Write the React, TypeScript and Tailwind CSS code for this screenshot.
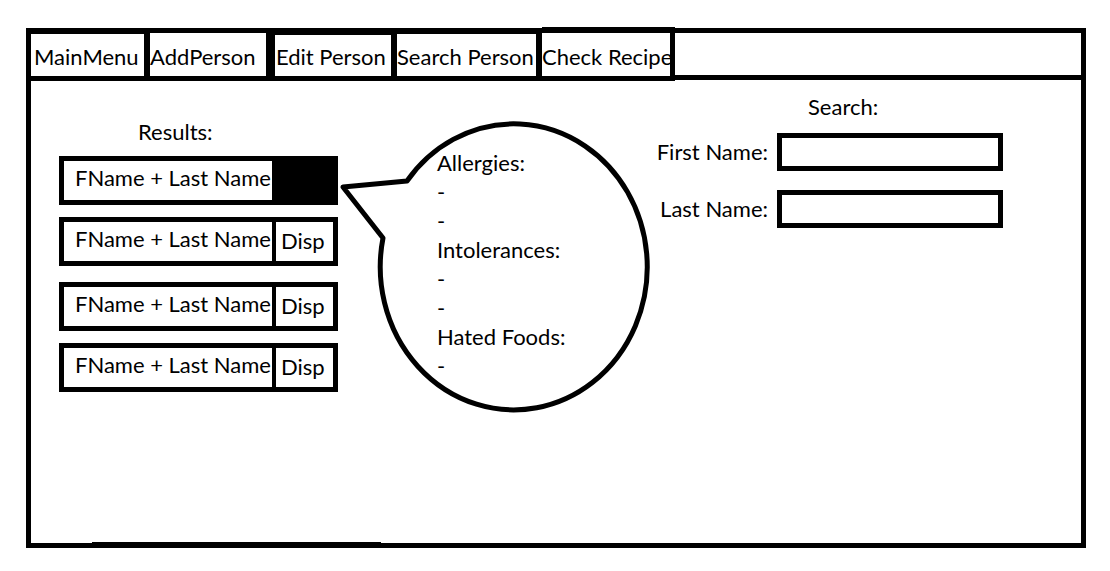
import React from "react";

const tabs = [
  { label: "MainMenu", box: "w-[119px] border-t border-r-6 pl-[3px]" },
  { label: "AddPerson", box: "w-[125px] border-r-9" },
  { label: "Edit Person", box: "w-[122px] border-t-2 border-r-6 pl-px" },
  { label: "Search Person", box: "w-[145px] border-t border-r-6" },
  { label: "Check Recipe", box: "-mt-[6px] w-[133px] border-t-6 border-r-5" },
];

const resultGroups = [
  [
    { id: 1, selected: true },
    { id: 2, selected: false },
  ],
  [
    { id: 3, selected: false },
    { id: 4, selected: false },
  ],
];

const details = [
  { title: "Allergies:", items: ["-", "-"] },
  { title: "Intolerances:", items: ["-", "-"] },
  { title: "Hated Foods:", items: ["-"] },
];

function NavBar() {
  return (
    <nav className="flex h-12">
      {tabs.map((tab) => (
        <a
          key={tab.label}
          href="#"
          className={`flex shrink-0 items-end border-b-5 border-black pb-[5px] whitespace-nowrap ${tab.box}`}
        >
          {tab.label}
        </a>
      ))}
      <div className="mb-px flex-1 border-b-5 border-black" />
    </nav>
  );
}

function ResultRow({ selected }: { selected: boolean }) {
  return (
    <li className="flex h-[49px] border-5 border-black">
      <span className="w-[208px] pt-[2px] pl-[11px] whitespace-nowrap">FName + Last Name</span>
      <button
        type="button"
        aria-label="Disp"
        aria-pressed={selected}
        className={`flex flex-1 items-start border-l-4 border-black pt-[4px] pl-[5px] ${selected ? "bg-black" : "bg-white"}`}
      >
        {selected ? null : "Disp"}
      </button>
    </li>
  );
}

function DetailBubble() {
  return (
    <section className="relative mt-10 ml-[2px] h-[292px] w-[312px] shrink-0 pt-[27px] pl-[97px]">
      <svg
        viewBox="0 0 312 292"
        className="absolute inset-0 h-full w-full"
        fill="none"
        stroke="black"
        strokeWidth="5"
        strokeLinecap="round"
        strokeLinejoin="round"
        aria-hidden="true"
      >
        <path d="M67 60 L3 66 L43 117 A133.5 143 0 1 0 67 60 Z" />
      </svg>
      <div className="relative">
        {details.map((group) => (
          <div key={group.title}>
            <h3>{group.title}</h3>
            <ul>
              {group.items.map((item, i) => (
                <li key={i}>{item}</li>
              ))}
            </ul>
          </div>
        ))}
      </div>
    </section>
  );
}

function SearchForm() {
  return (
    <form className="ml-[3px] w-[348px] shrink-0 pt-[11px]">
      <h2 className="pl-[153px]">Search:</h2>
      <div className="mt-3 flex flex-col gap-[19px]">
        {["First Name:", "Last Name:"].map((label) => (
          <label key={label} className="flex h-[38px] items-center">
            <span className="w-[122px] pr-[9px] pb-[2px] text-right whitespace-nowrap">{label}</span>
            <input
              type="text"
              className="h-full min-w-0 flex-1 border-5 border-black px-2 outline-none"
            />
          </label>
        ))}
      </div>
    </form>
  );
}

export default function App() {
  return (
    <div className="flex min-h-screen flex-col bg-white pt-7 pr-6 pb-[23px] pl-[26px] font-['Lato',sans-serif] text-[22px] leading-[29px] text-black">
      <div className="flex flex-1 flex-col border-5 border-black">
        <NavBar />
        <main className="flex flex-1 items-start pl-7">
          <section className="w-[279px] shrink-0 pt-9">
            <h2 className="pl-[79px]">Results:</h2>
            <div className="mt-[10px] flex flex-col gap-4">
              {resultGroups.map((group, i) => (
                <ul key={i} className="flex flex-col gap-3">
                  {group.map((row) => (
                    <ResultRow key={row.id} selected={row.selected} />
                  ))}
                </ul>
              ))}
            </div>
          </section>
          <DetailBubble />
          <SearchForm />
        </main>
        <div className="ml-[61px] h-px w-[289px] bg-black" />
      </div>
    </div>
  );
}
